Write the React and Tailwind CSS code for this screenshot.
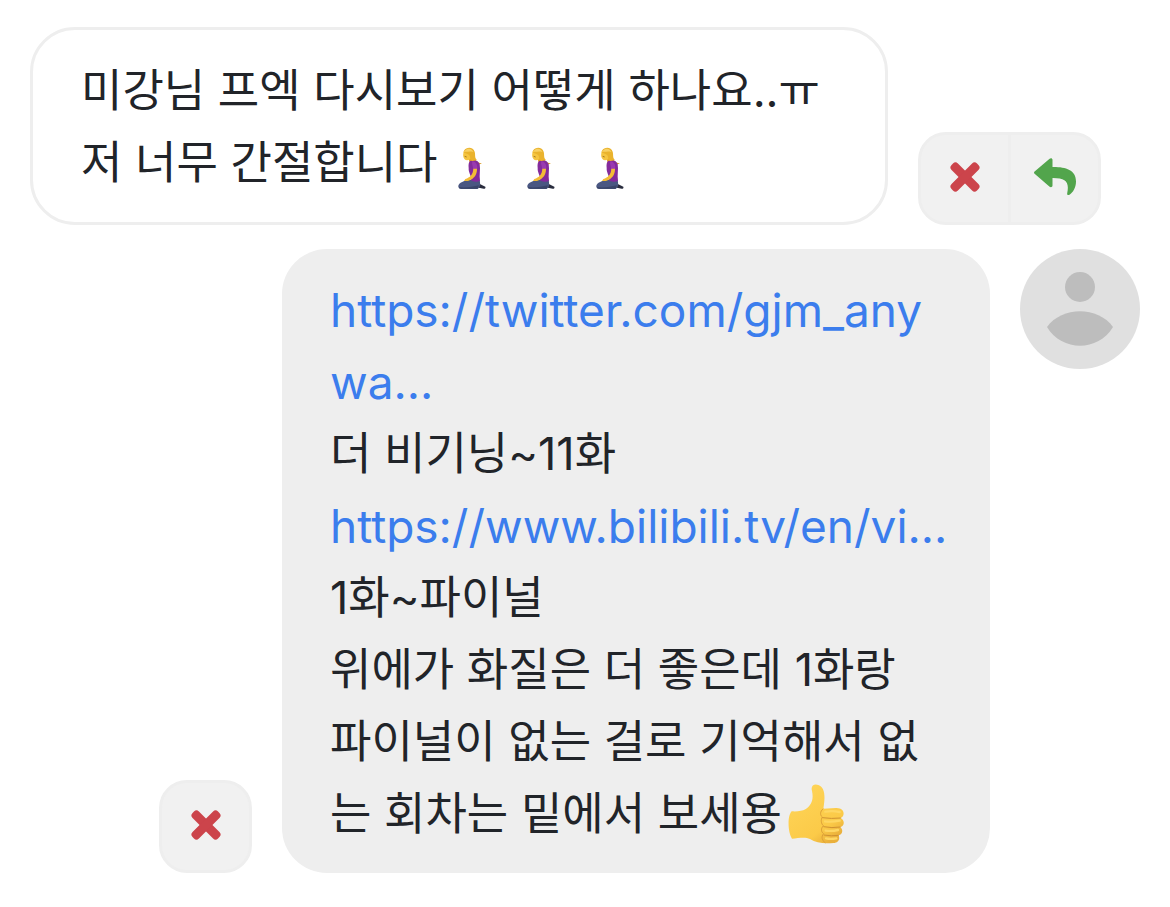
import React from 'react';

const CrossIcon = () => (
  <svg viewBox="0 0 30 30" className="size-[30px]" aria-hidden="true">
    <g fill="#cc444b">
      <rect x="-3" y="10.5" width="36" height="9" rx="3.5" transform="rotate(45 15 15)" />
      <rect x="-3" y="10.5" width="36" height="9" rx="3.5" transform="rotate(-45 15 15)" />
    </g>
  </svg>
);

const ReplyIcon = () => (
  <svg viewBox="0 0 42 38" className="h-[38px] w-[42px]" aria-hidden="true">
    <path
      d="M.6 13.6 15.6.7C16.8-.4 18.5.2 18.5 1.8V9C31 8.8 42 11.5 42 23.5 42 29.5 39 34.5 35.5 36.7 34 37.6 32.9 37 33.2 35.3 35.5 24 32 19.9 18.5 20V27.5C18.5 29.1 16.8 29.7 15.6 28.7L.6 15.8Q-.6 14.7.6 13.6Z"
      fill="#52a54c"
    />
  </svg>
);

const KneelingEmoji = () => (
  <svg viewBox="0 0 207 129" className="inline-block h-[43px] w-[69px] align-[-11px]" role="img" aria-label="무릎 꿇은 사람">
    <g transform="translate(60 1)">
      <path d="M44 28C53 35 54 46 72 48 64 53 54 52 46 45Z" fill="#d99b23" />
      <path d="M58 106 82 118Q84 124 77 124L55 120Z" fill="#292c3d" />
      <path d="M65 98C51 94 37 96 22 100 8 104 0 110 1 118Q2 125 10 125H58C66 122 68 112 65 98Z" fill="#4a5782" />
      <path d="M2 119C20 122 42 119 63 114L59 124H9Q3 124 2 119Z" fill="#3a4569" />
      <path d="M31 33H49L52 46 36 49Z" fill="#e3a526" />
      <path d="M36 41C50 35 62 40 65 51 68 67 63 83 66 100 56 106 43 103 39 99 40 83 31 76 32 62 31 52 32 45 36 41Z" fill="#842b9c" />
      <path d="M43 42C55 43 60 54 57 69L45 70C47 58 40 51 43 42Z" fill="#9a3ab0" />
      <path d="M46 64 57 64C57 82 50 93 30 101L18 101 22 95C36 90 45 82 46 64Z" fill="#f3bd35" />
      <path d="M17 14C13 26 17 38 27 39 39 38 47 31 45 15L32 4Z" fill="#f5c541" />
      <path d="M18 10C26-3 46-1 50 13 53 24 49 31 57 38L43 41C34 36 38 31 35 25 31 19 23 19 16 15Z" fill="#eab32d" />
      <path d="M20 10C29 0 43 3 46 14 35 11 26 15 17 13Z" fill="#f8d164" />
      <path d="M20 27 26 29" stroke="#805315" strokeWidth="2" />
    </g>
  </svg>
);

const ThumbsUpEmoji = () => (
  <svg viewBox="0 0 168 180" className="ml-[6px] inline-block h-[60px] w-[56px] align-[-14px]" role="img" aria-label="좋아요">
    <defs>
      <linearGradient id="thumbSkin" x1="0" y1="0" x2="0.7" y2="1">
        <stop offset="0" stopColor="#ffd65a" />
        <stop offset="0.8" stopColor="#fbca48" />
        <stop offset="1" stopColor="#eab03b" />
      </linearGradient>
    </defs>
    <path
      d="M11 82C29 83 43 81 52 76 69 65 78 48 72 21 67 5 79-2 91 3 112 10 112 39 106 74L143 72C171 70 172 97 158 102 172 110 169 126 157 129 167 138 163 151 152 154 157 167 150 177 137 177 109 180 84 177 66 165 51 158 31 163 12 164 0 148-3 97 11 82Z"
      fill="url(#thumbSkin)"
    />
    <path d="M106 74C95 83 96 94 103 99 98 107 99 119 106 125 98 134 99 144 107 149 98 158 103 170 112 177" fill="none" stroke="#dda038" strokeWidth="3" />
    <path d="M103 101Q130 105 158 102M106 128Q132 133 157 129M107 153Q130 157 152 154" fill="none" stroke="#cf9132" strokeWidth="3" />
    <g fill="none" stroke="#fed764" strokeWidth="7" strokeLinecap="round">
      <path d="M112 83Q134 79 155 84" />
      <path d="M111 112Q132 114 155 110" />
      <path d="M113 140Q133 142 150 138" />
      <path d="M114 163Q128 166 145 163" />
    </g>
  </svg>
);

const Avatar = () => (
  <svg viewBox="0 0 120 120" className="size-[120px] shrink-0" role="img" aria-label="프로필">
    <circle cx="60" cy="60" r="60" fill="#e0e0e0" />
    <circle cx="60" cy="38" r="15" fill="#bdbdbd" />
    <path d="M27 78C42 57 78 57 93 78 78 103 42 103 27 78Z" fill="#bdbdbd" />
  </svg>
);

const ActionButton = ({ label, children }) => (
  <button type="button" aria-label={label} className="flex h-[87px] flex-1 items-center justify-center pb-1">
    {children}
  </button>
);

const Actions = ({ className, children }) => (
  <div className={`flex shrink-0 self-end divide-x-[3px] divide-[#eeeeee] overflow-hidden rounded-[28px] border-[3px] border-[#eeeeee] bg-[#f1f1f1] ${className}`}>
    {children}
  </div>
);

const Line = ({ children }) => <span className="block whitespace-nowrap">{children}</span>;

const ChatLink = ({ href, children }) => (
  <a href={href} className="block text-[46px] leading-[72px] text-[#3b7ded]">{children}</a>
);

export default function App() {
  return (
    <main className="flex min-h-screen flex-col gap-6 bg-white px-[30px] py-[27px] font-['Inter','Noto_Sans_CJK_KR',sans-serif] text-[45px] leading-[72px] text-[#212429]">
      <div className="flex gap-[30px]">
        <div className="w-full max-w-[858px] rounded-[45px] border-[3px] border-[#eeeeee] px-12 pt-[25px] pb-[23px]">
          <Line>미강님 프엑 다시보기 어떻게 하나요..ㅠ</Line>
          <Line>
            저 너무 간절합니다
            <KneelingEmoji />
            <KneelingEmoji />
            <KneelingEmoji />
          </Line>
        </div>
        <Actions className="w-[183px]">
          <ActionButton label="삭제"><CrossIcon /></ActionButton>
          <ActionButton label="답장"><ReplyIcon /></ActionButton>
        </Actions>
      </div>

      <div className="flex justify-end gap-[30px]">
        <Actions className="w-[93px]">
          <ActionButton label="삭제"><CrossIcon /></ActionButton>
        </Actions>
        <div className="w-full max-w-[708px] rounded-[45px] bg-[#eeeeee] px-12 pt-[25px] pb-[23px]">
          <ChatLink href="#twitter">
            <Line>https://twitter.com/gjm_any</Line>
            <Line>wa...</Line>
          </ChatLink>
          <Line>더 비기닝~11화</Line>
          <ChatLink href="#bilibili">
            <Line>https://www.bilibili.tv/en/vi...</Line>
          </ChatLink>
          <Line>1화~파이널</Line>
          <Line>위에가 화질은 더 좋은데 1화랑</Line>
          <Line>파이널이 없는 걸로 기억해서 없</Line>
          <Line>는 회차는 밑에서 보세용<ThumbsUpEmoji /></Line>
        </div>
        <Avatar />
      </div>
    </main>
  );
}
